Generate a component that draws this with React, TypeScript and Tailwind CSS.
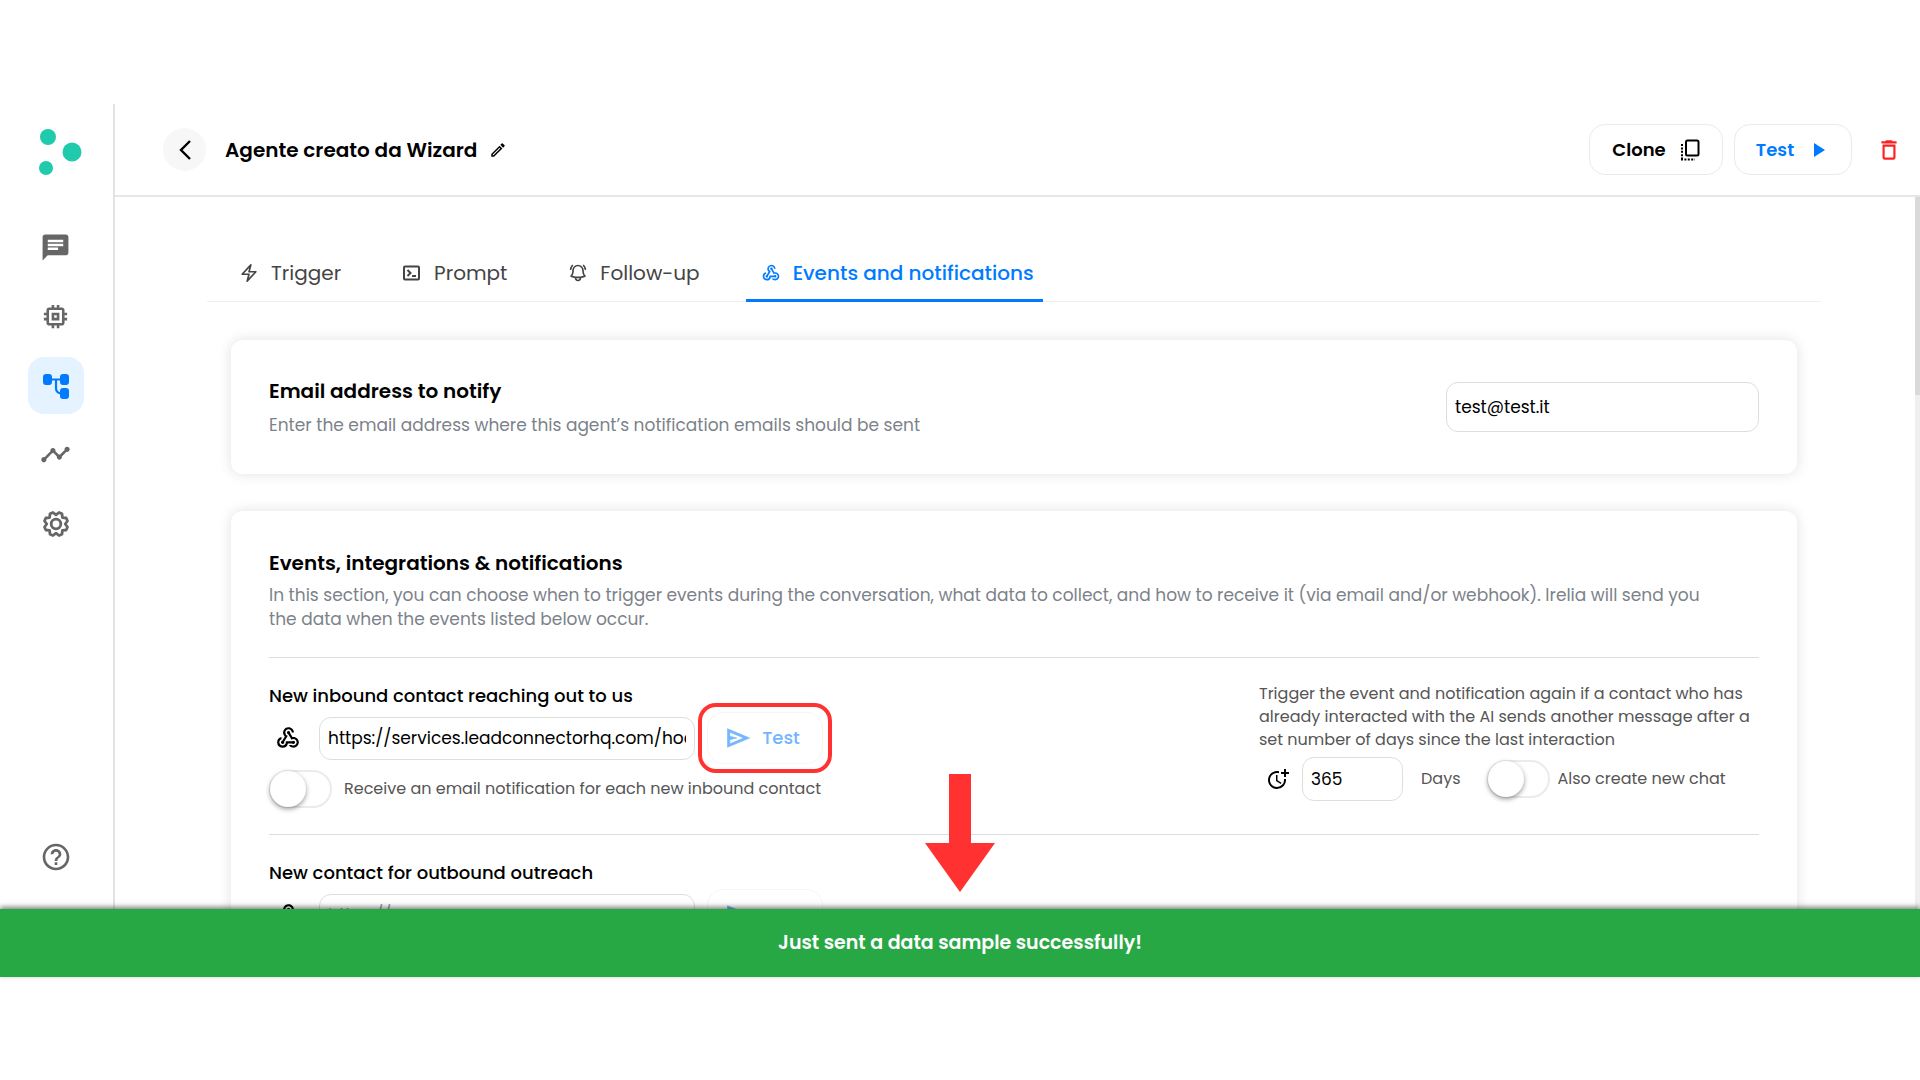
import React, { useState } from "react";
import { MdChat, MdMemory, MdTimeline, MdHelpOutline, MdWebhook, MdPlayArrow, MdDeleteOutline, MdOutlineMoreTime, MdOutlineModeEdit } from "react-icons/md";
import { HiOutlineBolt, HiOutlineBellAlert } from "react-icons/hi2";

const FlowIcon = () => (
  <svg viewBox="0 0 28 28" className="size-7 text-[#007bff]" fill="currentColor">
    <rect x="1" y="2" width="9" height="11" rx="3" />
    <rect x="18" y="2" width="9" height="11" rx="3" />
    <rect x="18" y="16" width="9" height="11" rx="3" />
    <path d="M9 7.500h10M14 7.500v9a5 5 0 0 0 5 5" fill="none" stroke="currentColor" strokeWidth="2.200" />
  </svg>
);

const GearIcon = () => (
  <svg viewBox="0 0 28 28" className="size-7" fill="none" stroke="currentColor" strokeWidth="2.800" strokeLinejoin="round">
    <path d="M11 2.500 L14 4.800 L17 2.500 L20 3.800 L20.400 7.600 L24.200 8 L25.500 11 L23.200 14 L25.500 17 L24.200 20 L20.400 20.400 L20 24.200 L17 25.500 L14 23.200 L11 25.500 L8 24.200 L7.600 20.400 L3.800 20 L2.500 17 L4.800 14 L2.500 11 L3.800 8 L7.600 7.600 L8 3.800 Z" />
    <circle cx="14" cy="14" r="4.800" />
  </svg>
);

const PromptIcon = () => (
  <svg viewBox="0 0 20 20" className="size-5" fill="none" stroke="currentColor" strokeWidth="2">
    <rect x="2" y="3.500" width="15" height="13" rx="1" />
    <path d="M5.500 7l3 3-3 3M10 13h4" />
  </svg>
);

const BackIcon = () => (
  <svg viewBox="0 0 14 22" className="h-[22px] w-3.5" fill="none" stroke="currentColor" strokeWidth="2.400">
    <path d="M12 2L3 11l9 9" />
  </svg>
);

const CloneIcon = () => (
  <svg viewBox="0 0 20 22" className="h-[22px] w-5" fill="none" stroke="currentColor" strokeWidth="2">
    <rect x="6" y="1.500" width="12.500" height="15" rx="1.500" />
    <path d="M2 5v17" strokeDasharray="2 1.400" />
    <path d="M1 20.500h14" strokeDasharray="2 1.400" />
  </svg>
);

const SendIcon = () => (
  <svg viewBox="0 -960 960 960" className="size-7" fill="currentColor">
    <path d="M120-160v-640l760 320-760 320Zm80-120 474-200-474-200v140l240 60-240 60v140Z" stroke="currentColor" strokeWidth="20" />
  </svg>
);

const navItems = [
  { label: "Chats", icon: <MdChat className="size-[31px]" /> },
  { label: "Models", icon: <MdMemory className="size-[31px]" /> },
  { label: "Agents", icon: <FlowIcon />, active: true },
  { label: "Analytics", icon: <MdTimeline className="size-[31px]" /> },
  { label: "Settings", icon: <GearIcon /> },
];

const tabs = [
  { label: "Trigger", icon: <HiOutlineBolt className="size-5" strokeWidth={2} /> },
  { label: "Prompt", icon: <PromptIcon /> },
  { label: "Follow-up", icon: <HiOutlineBellAlert className="size-5" strokeWidth={2} /> },
  { label: "Events and notifications", icon: <MdWebhook className="size-5" /> },
];

function Toggle({ id }: { id: string }) {
  const [on, setOn] = useState(false);
  return (
    <span className="relative h-[38px] w-[63px] shrink-0">
      <input id={id} type="checkbox" checked={on} onChange={(e) => setOn(e.target.checked)} className="peer h-full w-full appearance-none rounded-full border-2 border-[#ebebeb] bg-white checked:bg-[#007bff]" />
      <span className="pointer-events-none absolute left-px top-px size-9 rounded-full bg-white shadow-[0_2px_5px_rgba(0,0,0,0.4)] peer-checked:left-[26px]" />
    </span>
  );
}

function WebhookRow({ id, value, highlight }: { id: string; value: string; highlight?: boolean }) {
  const [url, setUrl] = useState(value);
  return (
    <div className="mt-0.5 flex h-[52px] items-center">
      <label htmlFor={id} aria-label="Webhook URL" className="w-[50px] pl-1.5"><MdWebhook className="size-[26px]" /></label>
      <input id={id} value={url} placeholder="https://" onChange={(e) => setUrl(e.target.value)} className="h-[43px] w-[376px] rounded-xl border border-[#dedede] px-2 text-[17px] outline-none placeholder:text-gray-400" />
      <div className="relative ml-3">
        <button type="button" className="flex h-[52px] w-[116px] items-center justify-center gap-2.5 rounded-2xl border border-[#f5f5f5] pr-1.5 text-lg font-medium text-[#73b5ff]">
          <SendIcon />Test
        </button>
        {highlight && <span className="pointer-events-none absolute -inset-[9px] rounded-[18px] border-4 border-[#ff3131]" />}
      </div>
    </div>
  );
}

export default function App() {
  const [tab, setTab] = useState("Events and notifications");
  const [email, setEmail] = useState("test@test.it");
  const [days, setDays] = useState("365");

  return (
    <div className="relative flex h-screen flex-col overflow-hidden bg-white pt-26 font-['Poppins','Inter',sans-serif] text-black">
      <div className="flex h-[805px] overflow-hidden">
        <aside className="flex w-[115px] shrink-0 flex-col items-center border-r-2 border-[#e3e3e3] pr-0.5 pb-9 text-[#666]">
          <svg viewBox="0 0 44 48" className="mt-6 ml-2.5 h-12 w-11" fill="#1fcbac">
            <circle cx="9" cy="9" r="8" />
            <circle cx="33" cy="24" r="9.500" />
            <circle cx="7" cy="40" r="7" />
          </svg>
          <nav className="mt-[43px] flex flex-col gap-3">
            {navItems.map((n) => (
              <button key={n.label} type="button" aria-label={n.label} className={n.active ? "flex h-[57px] w-14 items-center justify-center rounded-2xl bg-[#e5f2ff]" : "flex h-[57px] w-14 items-center justify-center"}>
                {n.icon}
              </button>
            ))}
          </nav>
          <button type="button" aria-label="Help" className="mt-auto"><MdHelpOutline className="size-8" /></button>
        </aside>

        <div className="flex min-w-0 flex-1 flex-col">
          <header className="flex h-[93px] shrink-0 items-center border-b-2 border-[#e6e6e6] pr-[18px] pl-12">
            <button type="button" aria-label="Back" className="flex size-[43px] items-center justify-center rounded-full bg-[#f7f7f7]"><BackIcon /></button>
            <h1 className="ml-[19px] text-xl font-semibold">Agente creato da Wizard</h1>
            <button type="button" aria-label="Rename" className="ml-3"><MdOutlineModeEdit className="size-[18px]" /></button>
            <button type="button" className="ml-auto flex h-[51px] w-[134px] items-center justify-center gap-3.5 rounded-2xl border border-[#ebebeb] text-lg font-semibold">
              Clone<CloneIcon />
            </button>
            <button type="button" className="ml-[11px] flex h-[51px] w-[118px] items-center justify-center gap-3 rounded-2xl border border-[#ebebeb] text-lg font-semibold text-[#007bff]">
              Test<MdPlayArrow className="size-6" />
            </button>
            <button type="button" aria-label="Delete" className="ml-6 text-[#ff2121]"><MdDeleteOutline className="size-[26px]" /></button>
          </header>

          <div className="flex min-h-0 flex-1">
            <main className="min-w-0 flex-1 overflow-hidden pr-[94px] pl-[92px]">
              <div role="tablist" className="mt-[51px] flex h-[54px] items-end gap-[37px] border-b border-[#efefef] pl-[17px]">
                {tabs.map((t) => (
                  <button key={t.label} type="button" role="tab" aria-selected={tab === t.label} onClick={() => setTab(t.label)} className={tab === t.label ? "-mb-px flex h-[55px] items-center gap-3 border-b-[3px] border-[#007bff] pr-[9px] pl-[15px] text-xl font-medium text-[#007bff]" : "-mb-px flex h-[55px] items-center gap-3 border-b-[3px] border-transparent pr-[9px] pl-[15px] text-xl text-[#444]"}>
                    {t.icon}{t.label}
                  </button>
                ))}
              </div>

              <div className="px-6">
                <section className="mt-[38px] flex h-[134px] items-center justify-between rounded-xl px-[38px] shadow-[0_0_14px_rgba(0,0,0,0.12)]">
                  <div>
                    <h2 className="text-xl font-semibold">Email address to notify</h2>
                    <label htmlFor="email" className="mt-2 block text-[17px]/6 text-[#7c828a]">Enter the email address where this agent’s notification emails should be sent</label>
                  </div>
                  <input id="email" type="email" value={email} onChange={(e) => setEmail(e.target.value)} className="h-[50px] w-[313px] rounded-xl border border-[#dedede] px-2 text-[17px] outline-none" />
                </section>

                <section className="mt-[37px] h-[600px] rounded-xl px-[38px] pt-[38px] shadow-[0_0_14px_rgba(0,0,0,0.12)]">
                  <h2 className="text-xl font-semibold">Events, integrations &amp; notifications</h2>
                  <p className="mt-1.5 pr-10 text-[17px]/6 text-[#7c828a]">In this section, you can choose when to trigger events during the conversation, what data to collect, and how to receive it (via email and/or webhook). Irelia will send you the data when the events listed below occur.</p>

                  <div className="mt-[26px] flex h-[177px] justify-between border-t border-[#dedede] pt-6">
                    <div>
                      <h3 className="text-lg font-medium">New inbound contact reaching out to us</h3>
                      <WebhookRow id="inbound" value="https://services.leadconnectorhq.com/hooks/" highlight />
                      <div className="mt-1.5 flex items-center gap-3">
                        <Toggle id="inbound-mail" />
                        <label htmlFor="inbound-mail" className="text-base text-[#555]">Receive an email notification for each new inbound contact</label>
                      </div>
                    </div>
                    <div className="w-[500px] text-[#555]">
                      <p className="text-base/[23px]">Trigger the event and notification again if a contact who has already interacted with the AI sends another message after a set number of days since the last interaction</p>
                      <div className="mt-1.5 flex items-center pl-[7px]">
                        <MdOutlineMoreTime className="size-6 text-black" />
                        <input id="days" value={days} onChange={(e) => setDays(e.target.value)} className="ml-3 h-11 w-[101px] rounded-xl border border-[#dedede] px-2 text-[17px] text-black outline-none" />
                        <label htmlFor="days" className="mr-[26px] ml-[18px] text-base">Days</label>
                        <Toggle id="new-chat" />
                        <label htmlFor="new-chat" className="ml-2 text-base">Also create new chat</label>
                      </div>
                    </div>
                  </div>

                  <div className="border-t border-[#dedede] pt-6">
                    <h3 className="text-lg font-medium">New contact for outbound outreach</h3>
                    <WebhookRow id="outbound" value="" />
                  </div>
                </section>
              </div>
            </main>
            <div className="w-[5px] bg-[#efefef]"><div className="h-[198px] bg-[#d9d9d9]" /></div>
          </div>
        </div>
      </div>

      <div role="status" className="relative flex h-[68px] shrink-0 items-center justify-center bg-[#28a745] text-[19px] font-semibold text-white shadow-[0_-2px_5px_rgba(0,0,0,0.5)]">
        Just sent a data sample successfully!
        <svg viewBox="0 0 70 118" className="absolute bottom-[85px] h-[118px] w-[70px]" fill="#ff3131">
          <path d="M24 0h22v69h24L35 118 0 69h24z" />
        </svg>
      </div>
    </div>
  );
}
